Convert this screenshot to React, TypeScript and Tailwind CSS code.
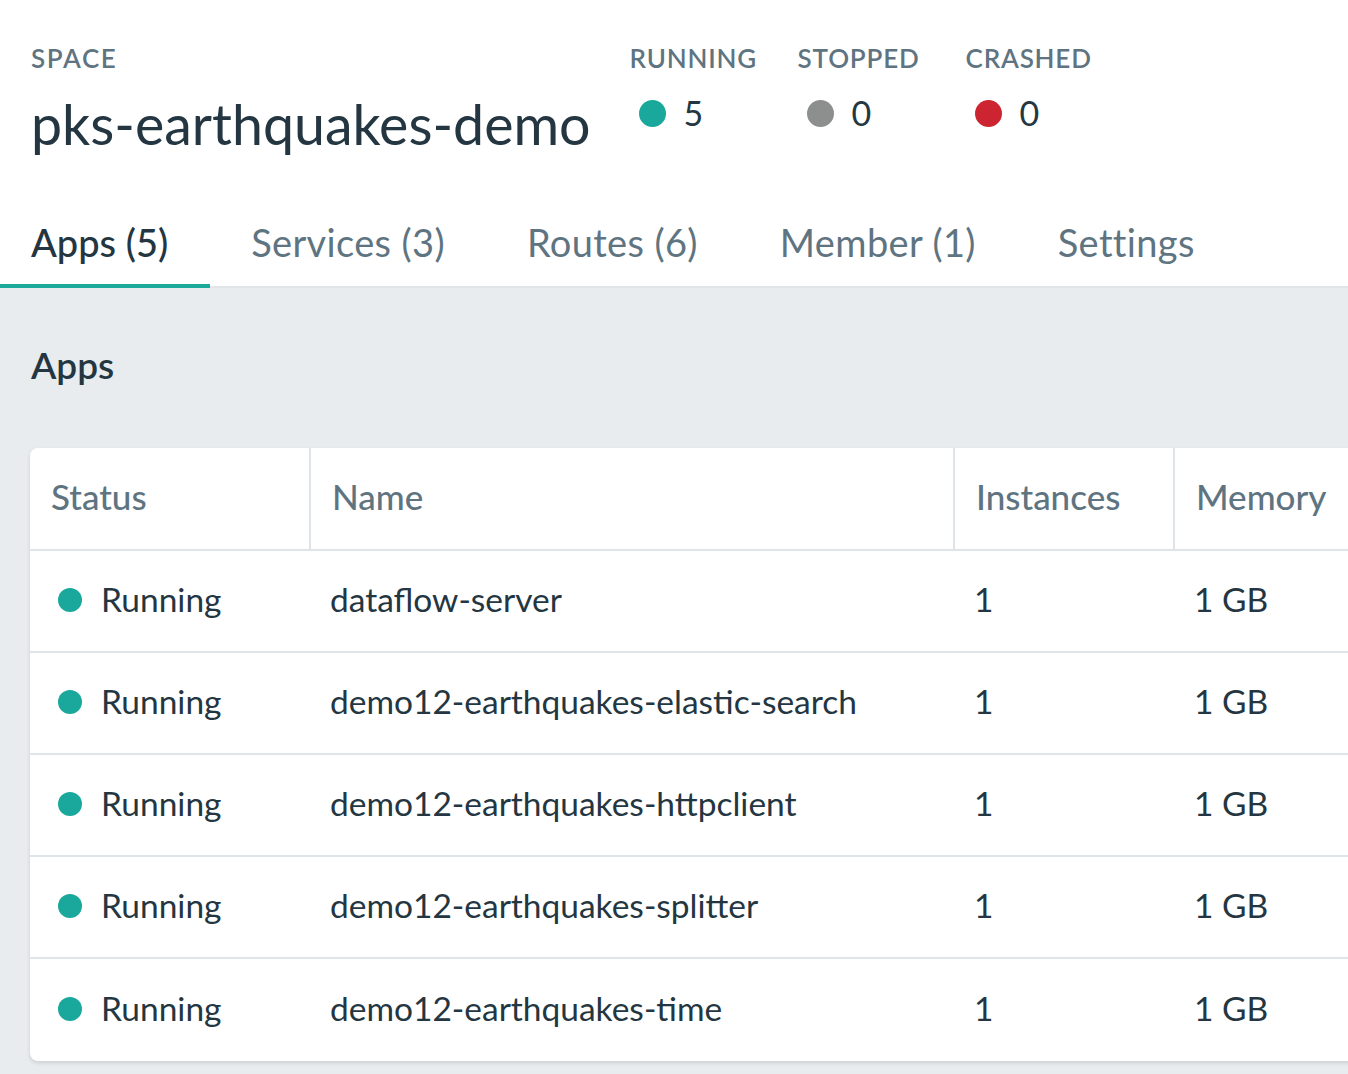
import React from "react";

const apps = [
  "dataflow-server",
  "demo12-earthquakes-elastic-search",
  "demo12-earthquakes-httpclient",
  "demo12-earthquakes-splitter",
  "demo12-earthquakes-time",
];

const stats = [
  { label: "RUNNING", value: 5, dot: "bg-[#19a89b]" },
  { label: "STOPPED", value: 0, dot: "bg-[#8d8e8e]" },
  { label: "CRASHED", value: 0, dot: "bg-[#cc2531]" },
];

const tabs = ["Apps (5)", "Services (3)", "Routes (6)", "Member (1)", "Settings"];

export default function App() {
  return (
    <div className="flex h-[1074px] w-[1348px] flex-col overflow-hidden bg-white font-['Lato',sans-serif] text-[#243641]">
      <header className="flex gap-[39px] px-[31px] pt-[42px]">
        <div>
          <div className="text-[26px] font-semibold leading-[32px] tracking-[1.6px] text-[#5f7481]">SPACE</div>
          <h1 className="mt-[18px] text-[55.5px] leading-[64px]">pks-earthquakes-demo</h1>
        </div>
        <div className="flex gap-[42px]">
          {stats.map((s) => (
            <div key={s.label} className="w-[126px]">
              <div className="text-[26px] font-semibold leading-[32px] tracking-[0.8px] text-[#5f7481]">{s.label}</div>
              <div className="mt-[19px] flex items-center gap-[18px] pl-[9px]">
                <span className={`h-[27px] w-[27px] rounded-full ${s.dot}`} />
                <span className="text-[34px] leading-[40px]">{s.value}</span>
              </div>
            </div>
          ))}
        </div>
      </header>

      <nav className="mt-[56px] flex border-b-2 border-[#e1e5e8]">
        {tabs.map((t, i) => (
          <div
            key={t}
            className={`-mb-[2px] pb-[20px] pt-[8px] text-[38px] leading-[44px] ${
              i === 0
                ? "border-b-[4px] border-[#1ba99b] pl-[31px] pr-[42px] font-medium text-[#243641]"
                : "border-b-[4px] border-transparent px-[41px] tracking-[0.35px] text-[#5f7481]"
            }`}
          >
            {t}
          </div>
        ))}
      </nav>

      <main className="flex-1 bg-[#e8ecef] pl-[30px] pt-[55px]">
        <h2 className="pl-[1px] text-[37px] font-semibold leading-[44px]">Apps</h2>
        <div className="mt-[61px] w-[1500px] rounded-l-[8px] bg-white shadow-[0_2px_4px_rgba(0,0,0,0.12)]">
          <div className="flex h-[103px] items-center border-b-2 border-[#dfe4e8] text-[35px] font-medium text-[#5f7481]">
            <div className="flex h-full w-[279px] items-center px-[21px] pb-[4px]">Status</div>
            <div className="flex h-full w-[644px] items-center border-l-2 border-[#dfe4e8] px-[21px] pb-[4px]">Name</div>
            <div className="flex h-full w-[220px] items-center border-l-2 border-[#dfe4e8] px-[21px] pb-[4px]">Instances</div>
            <div className="flex h-full w-[220px] items-center border-l-2 border-[#dfe4e8] px-[21px] pb-[4px]">Memory</div>
            <div className="h-full flex-1 border-l-2 border-[#dfe4e8]" />
          </div>
          {apps.map((name, i) => (
            <div
              key={name}
              className={`flex h-[102px] items-center pb-[3px] text-[33.5px] ${i < apps.length - 1 ? "border-b-2 border-[#dfe4e8]" : ""}`}
            >
              <div className="flex w-[279px] items-center gap-[19px] pl-[28px]">
                <span className="h-[24px] w-[24px] rounded-full bg-[#19a89b]" />
                <span>Running</span>
              </div>
              <div className="w-[644px] pl-[21px]">{name}</div>
              <div className="w-[220px] pl-[21px]">1</div>
              <div className="w-[220px] pl-[21px]">1 GB</div>
            </div>
          ))}
        </div>
      </main>
    </div>
  );
}
